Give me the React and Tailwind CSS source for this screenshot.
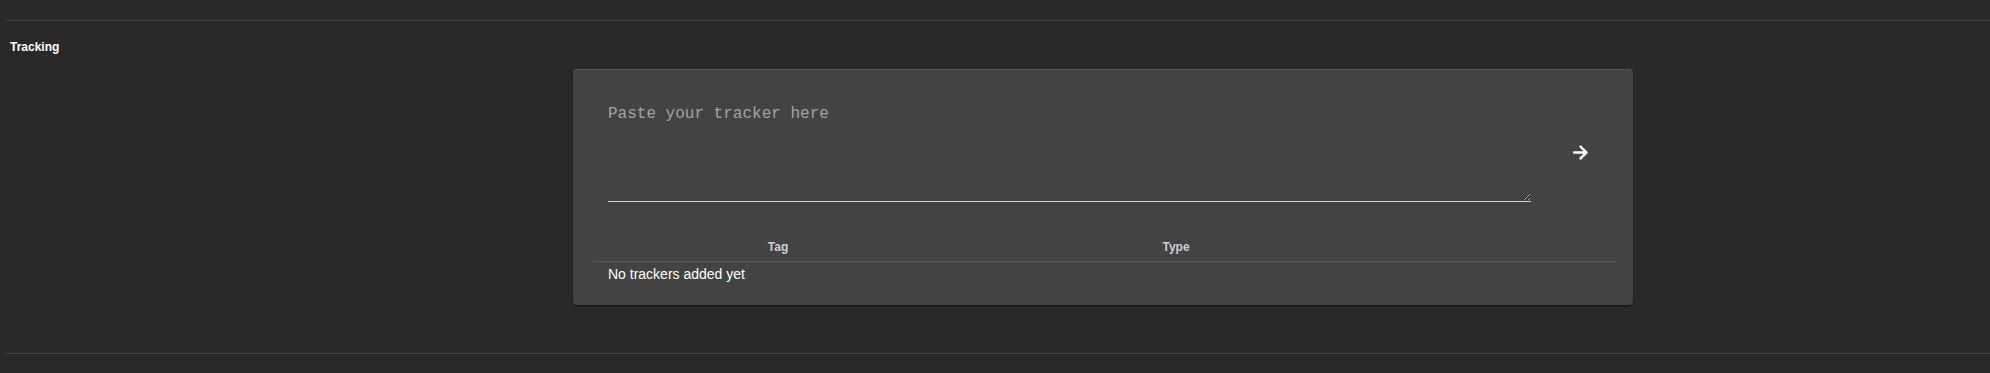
import React from "react";
import { FaArrowRight } from "react-icons/fa";

export default function App() {
  return (
    <div className="w-full h-[373px] bg-[#292929] overflow-hidden" style={{ fontFamily: '"Liberation Sans", Arial, sans-serif' }}>
      <div className="pt-[20px]">
        <div className="ml-[6px] h-px bg-[#434343]" />
      </div>
      <div className="pl-[10px] pt-[19px] h-[48px] text-[12px] font-bold text-white leading-[14px]">Tracking</div>
      <div className="ml-[573px] w-[1060px] h-[236px] rounded-[4px] bg-[#434343] border-t border-[#555] shadow-[0_1px_2px_rgba(0,0,0,0.6)] pl-[20px] pt-[32px]">
        <div className="flex items-center pl-[15px]">
          <textarea
            placeholder="Paste your tracker here"
            className="w-[923px] h-[100px] bg-transparent border-0 border-b border-[#d0d0d0] outline-none text-[16px] leading-[18px] text-white placeholder:text-[#a3a3a3] p-0 pt-[3px]"
            style={{ fontFamily: '"Liberation Mono", "Courier New", monospace' }}
          />
          <button className="ml-[41px] text-white flex items-center justify-center">
            <FaArrowRight size={17} />
          </button>
        </div>
        <div className="mt-[30px] w-[1023px]">
          <div className="grid grid-cols-[370px_426px_227px] h-[30px] items-center border-b border-[#5a5a5a] text-[12px] font-bold text-[#cfcfcf]">
            <div className="text-center">Tag</div>
            <div className="text-center">Type</div>
            <div />
          </div>
          <div className="pl-[15px] h-[24px] flex items-center text-[14px] text-white">No trackers added yet</div>
        </div>
      </div>
      <div className="pt-[48px]">
        <div className="ml-[5px] h-px bg-[#434343]" />
      </div>
    </div>
  );
}
